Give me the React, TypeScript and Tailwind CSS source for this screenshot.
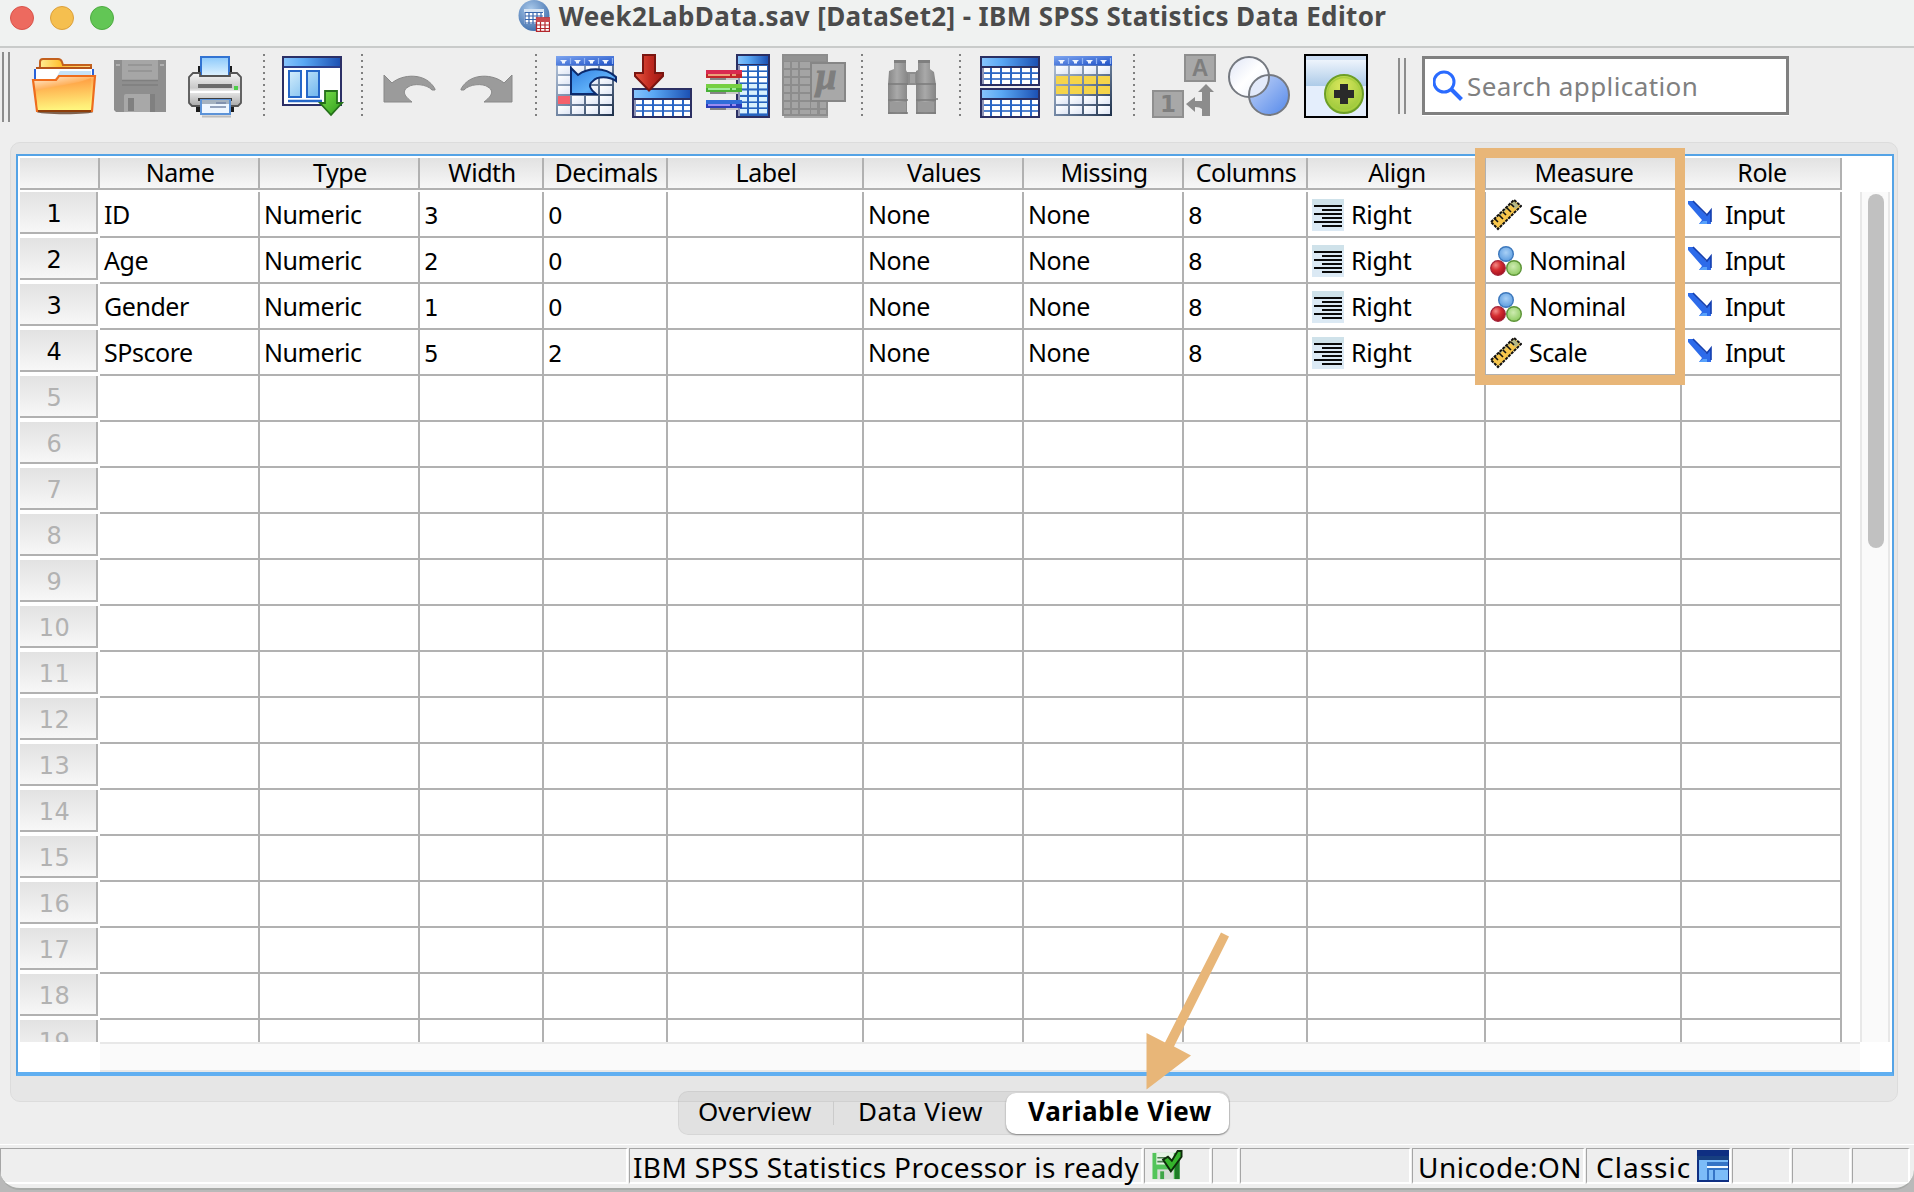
import React from "react";

const SANS = "font-['Noto_Sans','Open_Sans',sans-serif]";
const DIGITS = "font-['DejaVu_Sans',sans-serif]";
const COLUMNS =
  "grid grid-cols-[160px_160px_124px_124px_196px_160px_160px_124px_178px_196px_160px]";

const headers = ["Name", "Type", "Width", "Decimals", "Label", "Values", "Missing", "Columns", "Align", "Measure", "Role"];

type Variable = { name: string; width: string; decimals: string; measure: "Scale" | "Nominal" };

const variables: Variable[] = [
  { name: "ID", width: "3", decimals: "0", measure: "Scale" },
  { name: "Age", width: "2", decimals: "0", measure: "Nominal" },
  { name: "Gender", width: "1", decimals: "0", measure: "Nominal" },
  { name: "SPscore", width: "5", decimals: "2", measure: "Scale" },
];

/* ---------- shared gradients ---------- */

function Gradients() {
  return (
    <svg className="absolute h-0 w-0" aria-hidden="true">
      <defs>
        <linearGradient id="blueBar" x1="0" x2="1" y1="0" y2="0">
          <stop offset="0" stopColor="#86c4fd" />
          <stop offset="0.35" stopColor="#5aa8f4" />
          <stop offset="1" stopColor="#1c51b4" />
        </linearGradient>
        <linearGradient id="gridBar" x1="0" x2="1" y1="0" y2="1">
          <stop offset="0" stopColor="#7fa6f0" />
          <stop offset="1" stopColor="#1c4fc6" />
        </linearGradient>
        <linearGradient id="gridFrame" x1="0" x2="1" y1="0" y2="1">
          <stop offset="0" stopColor="#b6c6dc" />
          <stop offset="0.5" stopColor="#7387a4" />
          <stop offset="1" stopColor="#1d2f49" />
        </linearGradient>
        <linearGradient id="gridCell" x1="0" x2="1" y1="0" y2="1">
          <stop offset="0" stopColor="#ffffff" />
          <stop offset="1" stopColor="#dfe6f5" />
        </linearGradient>
        <linearGradient id="pane" x1="0" x2="1" y1="0" y2="1">
          <stop offset="0" stopColor="#d4eefc" />
          <stop offset="1" stopColor="#6fb6ee" />
        </linearGradient>
        <linearGradient id="folderFront" x1="0" x2="0.35" y1="0" y2="1">
          <stop offset="0" stopColor="#fff3e6" />
          <stop offset="0.4" stopColor="#ffae55" />
          <stop offset="1" stopColor="#fff67e" />
        </linearGradient>
        <linearGradient id="folderShine" x1="0" x2="0" y1="0" y2="1">
          <stop offset="0" stopColor="#ff9a3c" />
          <stop offset="1" stopColor="#fff77f" />
        </linearGradient>
        <linearGradient id="folderBack" x1="0" x2="1" y1="0" y2="0">
          <stop offset="0" stopColor="#fff2a0" />
          <stop offset="0.45" stopColor="#ffbf2e" />
          <stop offset="1" stopColor="#ffd989" />
        </linearGradient>
        <linearGradient id="paperBlue" x1="0" x2="0" y1="0" y2="1">
          <stop offset="0" stopColor="#8cc9fb" />
          <stop offset="1" stopColor="#e4f5ff" />
        </linearGradient>
        <linearGradient id="printerBody" x1="0" x2="0" y1="0" y2="1">
          <stop offset="0" stopColor="#f4f4f4" />
          <stop offset="0.45" stopColor="#c9c9c9" />
          <stop offset="0.55" stopColor="#ececec" />
          <stop offset="1" stopColor="#a8a8a8" />
        </linearGradient>
        <linearGradient id="greenArrow" x1="0" x2="1" y1="0" y2="1">
          <stop offset="0" stopColor="#7be04a" />
          <stop offset="1" stopColor="#2f9d1c" />
        </linearGradient>
        <linearGradient id="redArrow" x1="0" x2="1" y1="0" y2="0">
          <stop offset="0" stopColor="#e8553f" />
          <stop offset="0.55" stopColor="#c02a20" />
          <stop offset="1" stopColor="#a01a14" />
        </linearGradient>
        <linearGradient id="curveArrow" x1="0" x2="1" y1="0" y2="1">
          <stop offset="0" stopColor="#2f7fe2" />
          <stop offset="0.6" stopColor="#5fb0f8" />
          <stop offset="1" stopColor="#1d5fd0" />
        </linearGradient>
        <linearGradient id="whiteDisc" x1="0" x2="1" y1="0" y2="1">
          <stop offset="0" stopColor="#dfe5f6" />
          <stop offset="0.5" stopColor="#ffffff" />
          <stop offset="1" stopColor="#e8eefb" />
        </linearGradient>
        <linearGradient id="blueDisc" x1="0" x2="1" y1="0" y2="1">
          <stop offset="0" stopColor="#c6d6f8" />
          <stop offset="1" stopColor="#5388ea" />
        </linearGradient>
        <linearGradient id="skyBand" x1="0" x2="0" y1="0" y2="1">
          <stop offset="0" stopColor="#eef4fc" />
          <stop offset="1" stopColor="#adcbe8" />
        </linearGradient>
        <radialGradient id="limeDisc" cx="0.45" cy="0.3" r="0.7">
          <stop offset="0" stopColor="#dbe85c" />
          <stop offset="1" stopColor="#97c53a" />
        </radialGradient>
        <radialGradient id="ballBlue" cx="0.5" cy="0.4" r="0.6">
          <stop offset="0" stopColor="#a8d0f6" />
          <stop offset="1" stopColor="#5c9cdf" />
        </radialGradient>
        <radialGradient id="ballRed" cx="0.35" cy="0.3" r="0.7">
          <stop offset="0" stopColor="#f28a86" />
          <stop offset="0.5" stopColor="#d42c30" />
          <stop offset="1" stopColor="#a8131f" />
        </radialGradient>
        <radialGradient id="ballGreen" cx="0.45" cy="0.4" r="0.6">
          <stop offset="0" stopColor="#cdebb0" />
          <stop offset="1" stopColor="#8fcb62" />
        </radialGradient>
        <linearGradient id="grayTube" x1="0" x2="1" y1="0" y2="0">
          <stop offset="0" stopColor="#868686" />
          <stop offset="0.45" stopColor="#a9a9a9" />
          <stop offset="1" stopColor="#858585" />
        </linearGradient>
        <radialGradient id="appDisc" cx="0.4" cy="0.3" r="0.75">
          <stop offset="0" stopColor="#a9c9ea" />
          <stop offset="1" stopColor="#3d6cab" />
        </radialGradient>
      </defs>
    </svg>
  );
}

/* ---------- toolbar icons (64 x 64 grid) ---------- */

function Icon({ children }: { children: React.ReactNode }) {
  return (
    <svg viewBox="0 0 64 64" className="h-16 w-16 shrink-0 overflow-visible">
      {children}
    </svg>
  );
}

const OpenIcon = () => (
  <Icon>
    <ellipse cx="33" cy="58" rx="28" ry="2.2" fill="#5b3215" opacity="0.75" />
    <path d="M5 50V16l3-3V8q0-3 3-3h15q3 0 4 3l1 3h28v20H5z" fill="url(#folderBack)" stroke="#c3601d" strokeWidth="2" />
    <path d="M3 28V15h58v13z" fill="#ffffff" />
    <path d="M3 15v11M61 15v11" stroke="#2a62d8" strokeWidth="2" />
    <path d="M4 14h56" stroke="#b5541a" strokeWidth="2" />
    <path d="M24 24l4-7h31v10H20z" fill="#c5e2f8" />
    <path d="M1 26h23l3-4h36l-3 35H5z" fill="url(#folderFront)" stroke="#ee6d1d" strokeWidth="2.2" />
    <path d="M4 37C24 31 42 31 59 24l-1 32H6z" fill="url(#folderShine)" opacity="0.7" />
    <path d="M6 57h53" stroke="#8e3d0a" strokeWidth="2" />
  </Icon>
);

const SaveIcon = () => (
  <Icon>
    <path d="M6 6h52v52H8l-2-2z" fill="#8e8e8e" />
    <path d="M14 6h36v20H14z" fill="#a6a6a6" />
    <path d="M20 11h24M20 17h24" stroke="#969696" strokeWidth="2" />
    <path d="M14 26.500h36M14 31h36" stroke="#7f7f7f" strokeWidth="1.500" />
    <path d="M8 10h4v2H8zM52 10h4v2h-4z" fill="#b0b0b0" />
    <path d="M16 42q0-2 2-2h26v18H16z" fill="#a8a8a8" />
    <path d="M20 44h6v13h-6zM42 40h5v18h-5z" fill="#808080" />
  </Icon>
);

const PrintIcon = () => (
  <Icon>
    <path d="M14 12h34v14H14zM12 50h38v8H12z" fill="#1b1b1b" />
    <path d="M17 3h28v20H17z" fill="url(#paperBlue)" stroke="#3273d2" strokeWidth="2" />
    <path d="M9 19h7v3h30v-3h7l4 4v26l-3 3H8l-3-3V23z" fill="url(#printerBody)" stroke="#555" strokeWidth="1.800" />
    <path d="M14 30h34v4H14z" fill="#6b6b6b" />
    <path d="M50 32h4v4h-4z" fill="#4fce4a" />
    <path d="M6 38h50" stroke="#fff" strokeWidth="2" />
    <path d="M14 44h34v3H14z" fill="#3d3d3d" />
    <path d="M17 46h29v14H17z" fill="#eef6ff" stroke="#5c93d8" strokeWidth="2" />
    <path d="M18 46h27v4H18z" fill="#a5b2c0" />
    <path d="M32 49h10M26 53h16" stroke="#7586a8" strokeWidth="1.600" />
    <path d="M18 62.500h29" stroke="#bdbdbd" strokeWidth="2" />
  </Icon>
);

const RecallIcon = () => (
  <Icon>
    <path d="M3 3h58v48H3z" fill="#fff" stroke="#2b2f66" strokeWidth="2" />
    <path d="M4 4h56v9H4z" fill="url(#blueBar)" />
    <path d="M4 13h56" stroke="#2b3f8c" strokeWidth="2" />
    <path d="M9 17h12v26H9zM27 17h12v26H27z" fill="url(#pane)" stroke="#2567c8" strokeWidth="2" />
    <path d="M8 47h34" stroke="#2567c8" strokeWidth="2.500" />
    <path d="M45 37h12v12h5L51 61 40 49h5z" fill="url(#greenArrow)" stroke="#25701a" strokeWidth="1.800" />
  </Icon>
);

const curve = "M8 21l8 8c10-9 34-11 43 6v1h-3c-5-6-19-7-24-3-8 5-1 11 4 15H8z";

const UndoIcon = () => (
  <Icon>
    <path d={curve} fill="#9b9b9b" stroke="#888" strokeWidth="1" />
  </Icon>
);

const RedoIcon = () => (
  <Icon>
    <path d={curve} fill="#9b9b9b" stroke="#888" strokeWidth="1" transform="matrix(-1 0 0 1 68 0)" />
  </Icon>
);

/* 4 x 5 data grid with a filter-style header, 58 x 60 */
function DataGrid({ x = 0, accents = [] }: { x?: number; accents?: [number, number, string][] }) {
  const cols = [2, 16, 30, 44];
  const rows = [12, 22, 32, 42, 52];
  return (
    <g transform={`translate(${x} 2)`}>
      <path d="M0 0h58v60H0z" fill="url(#gridFrame)" />
      <path d="M0 0h58v9.500H0z" fill="url(#gridBar)" />
      {cols.map((c) => (
        <path key={c} d={`M${c + 2} 4h7l-2 2v1.500h-3V6z`} fill="#eef4ff" />
      ))}
      {cols.map((c) => (
        <path key={c} d={`M${c + 12.5} 2v6`} stroke="#8fb2f3" strokeWidth="1.200" />
      ))}
      {rows.map((r) =>
        cols.map((c) => {
          const hit = accents.find(([ax, ay]) => cols[ax] === c && rows[ay] === r);
          return <rect key={`${r}-${c}`} x={c} y={r - 2} width="12" height="8" fill={hit ? hit[2] : "url(#gridCell)"} />;
        }),
      )}
    </g>
  );
}

const GoToCaseIcon = () => (
  <Icon>
    <DataGrid x={2} accents={[[0, 3, "#f5606c"]]} />
    <path
      d="M17 14l7 7c9-7 26-9 38 2v4c-7-5-19-5-23 0-6 4-2 9 3 13H17z"
      fill="url(#curveArrow)"
      stroke="#0c2a6c"
      strokeWidth="2"
    />
  </Icon>
);

/* Blue-barred table used in several icons */
function BlueTable({ y, h, rows }: { y: number; h: number; rows: number[] }) {
  return (
    <g transform={`translate(2 ${y})`}>
      <rect width="60" height={h} fill="#2b2f62" />
      <rect x="2" y="2" width="56" height="8" fill="url(#blueBar)" />
      <rect x="2" y="12" width="56" height={h - 14} fill="#2b66c4" />
      <rect x="2" y="12" width="2" height={h - 14} fill="#8d93b5" />
      {rows.map((r) =>
        [4, 12, 22, 32, 42, 52].map((x) => (
          <rect key={`${r}-${x}`} x={x} y={r} width={x === 4 || x === 52 ? 6 : 8} height="4.200" fill="#fff" />
        )),
      )}
    </g>
  );
}

const GoToVariableIcon = () => (
  <Icon>
    <BlueTable y={34} h={30} rows={[12, 18, 23.8]} />
    <path d="M13 1h12v18h8v3L19 36.500 5 22v-3h8z" fill="url(#redArrow)" stroke="#7a1510" strokeWidth="2" />
  </Icon>
);

const VariablesIcon = () => (
  <Icon>
    <rect x="30" width="34" height="64" fill="#2b2f62" />
    <rect x="32" y="2" width="30" height="8" fill="url(#blueBar)" />
    <rect x="32" y="11" width="30" height="51" fill="#2764bf" />
    <rect x="32" y="11" width="2" height="51" fill="#8d93b5" />
    {[12, 18, 24, 30, 36.5, 43, 49, 55].map((y, i) =>
      [34, 43, 53].map((x) => (
        <rect key={`${x}-${y}`} x={x} y={y} width={x === 34 ? 7 : 8} height="4.400" fill={i > 2 ? "#d9f1fd" : "#fff"} />
      )),
    )}
    {[
      [16, "#d92a50", "#c2262a", "#eda27a"],
      [30, "#76cf42", "#48b038", "#a0ec9c"],
      [46, "#2f6dd8", "#2a3cb8", "#9a8cf0"],
    ].map(([y, a, b, c]) => (
      <g key={String(y)} transform={`translate(0 ${y})`}>
        <rect width="36" height="4" fill={String(a)} />
        <rect y="4" width="36" height="4" fill={String(b)} />
        <rect x="2" y="4" width="22" height="2" fill={String(c)} />
        <rect x="26" y="4" width="4" height="2" fill={String(c)} />
        <rect x="4" y="8" width="16" height="2" fill="#858585" />
        <rect x="20" y="8" width="12" height="2" fill="#c8c8c8" />
      </g>
    ))}
  </Icon>
);

const DescriptivesIcon = () => (
  <Icon>
    <path d="M2 62h44v2H2z" fill="#a9a9a9" />
    <path d="M0 0h46v62H0z" fill="#8d8d8d" />
    <path d="M2 2h42v5H2z" fill="#929292" />
    {[8, 16, 24, 32, 40, 48, 56].map((y) =>
      [2, 10, 18, 29, 38].map((x) => (
        <rect key={`${x}-${y}`} x={x} y={y} width={x === 18 ? 10 : 6} height={y === 56 ? 4 : 6} fill="#a4a4a4" />
      )),
    )}
    <path d="M29 9h34v38H29z" fill="#a8a8a8" stroke="#868686" strokeWidth="2" />
    <text x="34" y="35" fontSize="37" fontWeight="700" fontStyle="italic" fill="#7e7e7e" stroke="#7e7e7e" strokeWidth="1" fontFamily="Liberation Serif, serif">
      μ
    </text>
  </Icon>
);

const FindIcon = () => (
  <Icon>
    <path d="M27 18h12v13H27z" fill="#8d8d8d" />
    <path d="M30 20h5v9h-5z" fill="#a2a2a2" />
    <path d="M14 6h12v10l2 4v11h-1v29H8V31l1-14 5-2z" fill="url(#grayTube)" />
    <path d="M38 6h12v9l4 3 2 13v29H36V31V17l2-1z" fill="url(#grayTube)" />
    <path d="M14 6h12v3H14zM38 6h12v3H38z" fill="#7f7f7f" />
    <path d="M8 30h20M36 30h20M8 46h20M36 46h20M8 59h20M36 59h20" stroke="#7b7b7b" strokeWidth="1.500" />
    <path d="M10 48h16v10H10zM38 48h16v10H38z" fill="#9a9a9a" />
    <path d="M56 44h2v2h-2z" fill="#999" />
  </Icon>
);

const SplitIcon = () => (
  <Icon>
    <BlueTable y={2} h={30} rows={[12, 18, 23.8]} />
    <BlueTable y={34} h={30} rows={[12, 18, 23.8]} />
  </Icon>
);

const yellow: [number, number, string][] = [0, 1, 2, 3].flatMap((c) => [
  [c, 1, "#f5d44a"] as [number, number, string],
  [c, 2, "#f5d44a"] as [number, number, string],
]);

const SelectIcon = () => (
  <Icon>
    <DataGrid accents={yellow} />
  </Icon>
);

const ValueLabelsIcon = () => (
  <Icon>
    <path d="M33 1h30v26H33zM1 37h30v26H1z" fill="#a8a8a8" stroke="#8f8f8f" strokeWidth="2" />
    <text x="48" y="22" fontSize="23" fontWeight="700" textAnchor="middle" fill="#7e7e7e" fontFamily="Liberation Sans, sans-serif">
      A
    </text>
    <text x="16" y="58" fontSize="23" fontWeight="700" textAnchor="middle" fill="#7e7e7e" fontFamily="DejaVu Sans, sans-serif">
      1
    </text>
    <path d="M54 30l8 8h-4v24h-8V55q-2-2-7-2v5l-9-8 9-7v4h7V38h-4z" fill="#8c8c8c" />
  </Icon>
);

const SetsIcon = () => (
  <Icon>
    <circle cx="21" cy="23" r="20" fill="url(#whiteDisc)" />
    <circle cx="41" cy="41" r="20" fill="url(#blueDisc)" />
    <path d="M40.500 21A20 20 0 0 1 21.500 43 20 20 0 0 1 40.500 21z" fill="#e3eafa" />
    <circle cx="21" cy="23" r="20" fill="none" stroke="#757980" strokeWidth="2" />
    <circle cx="41" cy="41" r="20" fill="none" stroke="#757980" strokeWidth="2" />
  </Icon>
);

const CustomizeIcon = () => (
  <Icon>
    <rect width="64" height="64" fill="#000" />
    <rect x="2" y="2" width="60" height="60" fill="#e4eefc" />
    <rect x="2" y="2" width="60" height="4" fill="#cbdcf2" />
    <rect x="2" y="6" width="60" height="26" fill="url(#skyBand)" />
    <circle cx="40" cy="40" r="19" fill="url(#limeDisc)" stroke="#6d9f26" strokeWidth="2" />
    <circle cx="40" cy="40" r="16.500" fill="none" stroke="#a9cf3f" strokeWidth="1.500" />
    <path d="M36 30h8v6h6v8h-6v6h-8v-6h-6v-8h6z" fill="#2a2a2a" />
  </Icon>
);

const Dots = ({ className = "" }: { className?: string }) => (
  <div
    className={`h-[62px] w-[2px] shrink-0 bg-[repeating-linear-gradient(to_bottom,#808080_0_2px,transparent_2px_6px)] ${className}`}
  />
);

const Grip = ({ className = "" }: { className?: string }) => (
  <div className={`w-2 shrink-0 border-x-2 border-[#8d8d8d] ${className}`} />
);

/* ---------- cell icons ---------- */

const AlignRightIcon = () => (
  <svg viewBox="0 0 32 32" className="size-8 shrink-0">
    <rect width="32" height="32" fill="#dbe9f4" />
    <path d="M0 0h32v6H0z" fill="#cfe2ea" />
    <path d="M2 7h28M10 11h20M2 15h28M10 19h20M2 23h28M10 27h20" stroke="#0a0a0a" strokeWidth="2" />
  </svg>
);

const ScaleIcon = () => (
  <svg viewBox="0 0 32 32" className="size-8 shrink-0">
    <path d="M1 23L24 1l7 6L8 30z" fill="#f7c64c" />
    <path d="M8 17L24 2l5 5-4 3-4-4L9 18z" fill="#b5b887" />
    <path d="M1 23L24 1l7 6L8 30z" fill="none" stroke="#111" strokeWidth="2" strokeDasharray="3 1" />
    <path d="M5 20l3 3M9 16l4 4M13 13l3 3M17 9l4 4M21 5l3 3" stroke="#111" strokeWidth="1.600" />
  </svg>
);

const NominalIcon = () => (
  <svg viewBox="0 0 32 32" className="size-8 shrink-0">
    <circle cx="16" cy="9" r="7.300" fill="url(#ballBlue)" stroke="#3d78bd" strokeWidth="1.400" />
    <circle cx="8" cy="23" r="7.300" fill="url(#ballRed)" stroke="#a3243a" strokeWidth="1.200" />
    <circle cx="24" cy="23" r="7.300" fill="url(#ballGreen)" stroke="#5d9438" strokeWidth="1.400" />
  </svg>
);

const InputIcon = () => (
  <svg viewBox="0 0 32 32" className="size-8 shrink-0">
    <path d="M2 2h5l13 14 5-5v14H13l3-4L2 5z" fill="#2d6bea" />
    <path d="M7 2l14 14 4-5v12" fill="none" stroke="#153fae" strokeWidth="1.600" />
    <path d="M13 25h8v-3h-4z" fill="#58a2fb" />
  </svg>
);

/* ---------- status icons ---------- */

const SavedIcon = () => (
  <svg viewBox="0 0 32 32" className="h-[31px] w-8 shrink-0">
    <path d="M1 3h28v27H1z" fill="#53c55a" />
    <path d="M24 10h5v20h-5z" fill="#1e7c27" />
    <path d="M5 3h18v12H5z" fill="#e4f4e3" />
    <path d="M6 8h8M6 12h8" stroke="#4f7f52" strokeWidth="1.800" />
    <path d="M6 20h17v10H6z" fill="#d6dcd6" />
    <path d="M9 22h4v8H9z" fill="#3ea647" />
    <path d="M12 10l5-3 4 4 6-10h4v6l-11 15z" fill="#35b52c" stroke="#0d2d0a" strokeWidth="2" />
  </svg>
);

const ClassicIcon = () => (
  <svg viewBox="0 0 32 32" className="size-8 shrink-0">
    <path d="M0 0h32v32H0z" fill="#0f2f82" />
    <path d="M0 6h32v4H0z" fill="#173f80" />
    <path d="M2 10h29v20H2z" fill="#7cbcf8" />
    <path d="M10 12h21v18H10z" fill="#3474c6" />
    <path d="M10 16h21v2H10z" fill="#eef7ff" />
    <path d="M12 20h4v10h-4zM18 20h13v10H18z" fill="#7cbcf8" />
  </svg>
);

const AppIcon = () => (
  <svg viewBox="0 0 32 32" className="size-8 shrink-0">
    <circle cx="16" cy="15.500" r="15.500" fill="url(#appDisc)" />
    <path d="M6 9h20v15H6z" fill="#fff" />
    <path d="M6 9h20v3H6z" fill="#d6e4f3" />
    <path d="M7 12.500h18M7 16h18M7 19.500h18M7 23h18M7 12v12M11 12v12M15 12v12M19 12v12M23 12v12" stroke="#3767ae" strokeWidth="1.200" />
    <path d="M18.500 18h13v13.500h-13z" fill="#fff" stroke="#b3262c" strokeWidth="1.300" />
    <path d="M18 17.500h14V22H18z" fill="#c94a4f" />
    <path d="M18 25h14M18 28.500h14M22.500 22v9M27 22v9" stroke="#b3262c" strokeWidth="1.200" />
  </svg>
);

/* ---------- page ---------- */

const cell = "flex h-[46px] items-center border-b-2 border-r-2 border-[#b1b1b1] pl-1 pt-[2px]";
const digitCell = "flex h-[46px] items-center border-b-2 border-r-2 border-[#b1b1b1] pl-1 pt-1 font-['DejaVu_Sans',sans-serif] text-[23px]";
const panel = "flex shrink-0 items-center border-l border-t border-r-2 border-b-2 border-l-[#a5a5a5] border-t-[#a5a5a5] border-r-white border-b-white";

function Row({ index }: { index: number }) {
  const v = variables[index];
  return (
    <div className={COLUMNS}>
      <div className={cell}>{v?.name}</div>
      <div className={cell}>{v && "Numeric"}</div>
      <div className={digitCell}>{v?.width}</div>
      <div className={digitCell}>{v?.decimals}</div>
      <div className={cell} />
      <div className={cell}>{v && "None"}</div>
      <div className={cell}>{v && "None"}</div>
      <div className={digitCell}>{v && "8"}</div>
      <div className={`${cell} gap-[7px]`}>
        {v && (
          <>
            <AlignRightIcon />
            <span className="tracking-[-0.3px]">Right</span>
          </>
        )}
      </div>
      <div className={`${cell} gap-[7px]`}>
        {v && (
          <>
            {v.measure === "Scale" ? <ScaleIcon /> : <NominalIcon />}
            <span>{v.measure}</span>
          </>
        )}
      </div>
      <div className={`${cell} gap-[7px]`}>
        {v && (
          <>
            <InputIcon />
            <span className="tracking-[-0.9px]">Input</span>
          </>
        )}
      </div>
    </div>
  );
}

export default function App() {
  const rows = Array.from({ length: 19 }, (_, i) => i);
  return (
    <div className={`relative h-[1192px] w-[1914px] overflow-hidden bg-[#b9b9b9] text-black ${SANS}`}>
      <Gradients />
      <div className="flex h-[1190px] flex-col overflow-hidden rounded-b-[20px] border-b-2 border-[#a9aba9] bg-[#eeeeee]">
        {/* Title bar */}
        <div className="relative flex h-[48px] shrink-0 items-start justify-center border-b-2 border-[#c9cbca] bg-[#f0f2f1]">
          <div className="absolute left-[10px] top-[6px] flex gap-4">
            <span className="size-6 rounded-full border border-[#d9544b] bg-[#ed6a5f]" />
            <span className="size-6 rounded-full border border-[#dca03c] bg-[#f5bf4f]" />
            <span className="size-6 rounded-full border border-[#4dab41] bg-[#62c655]" />
          </div>
          <div className="flex items-center gap-[9px] pr-[10px]">
            <AppIcon />
            <h1 className="whitespace-nowrap text-[26px] font-bold leading-8 tracking-[0.37px] text-[#4b4b4b]">
              Week2LabData.sav [DataSet2] - IBM SPSS Statistics Data Editor
            </h1>
          </div>
        </div>

        {/* Toolbar */}
        <div className="flex h-[94px] shrink-0 items-start pl-[2px] pt-[6px]">
          <Grip className="-mt-[2px] mr-[22px] h-[70px]" />
          <div className="flex gap-3">
            <OpenIcon />
            <SaveIcon />
            <PrintIcon />
          </div>
          <Dots className="mx-[15px]" />
          <RecallIcon />
          <Dots className="ml-[17px] mr-[13px]" />
          <div className="flex gap-3">
            <UndoIcon />
            <RedoIcon />
          </div>
          <Dots className="ml-[19px] mr-[17px]" />
          <div className="flex gap-3">
            <GoToCaseIcon />
            <GoToVariableIcon />
            <VariablesIcon />
            <DescriptivesIcon />
          </div>
          <Dots className="ml-[15px] mr-[17px]" />
          <FindIcon />
          <Dots className="ml-[15px] mr-[17px]" />
          <div className="flex gap-3">
            <SplitIcon />
            <SelectIcon />
          </div>
          <Dots className="ml-[15px] mr-[17px]" />
          <div className="flex gap-3">
            <ValueLabelsIcon />
            <SetsIcon />
            <CustomizeIcon />
          </div>
          <Grip className="ml-[30px] mr-4 mt-1 h-14" />
          <div className="mt-[2px] flex h-[59px] w-[367px] items-center border-[3px] border-[#808080] bg-white pl-2 shadow-[0_1px_0_#fff]">
            <svg viewBox="0 0 32 32" className="size-8 shrink-0">
              <circle cx="11" cy="12" r="10" fill="none" stroke="#2a6bff" strokeWidth="3" />
              <path d="M18.500 19.500l10 10" stroke="#2a6bff" strokeWidth="4" />
            </svg>
            <span className="ml-[2px] pt-[1px] text-[26px] tracking-[0.4px] text-[#808080]">Search application</span>
          </div>
        </div>

        {/* Variable grid */}
        <div className="mx-auto flex h-[960px] w-[1888px] shrink-0 -translate-x-[3px] justify-start rounded-[10px] border border-[#dcdcdc] bg-[#e6e6e6] pl-[5px] pt-[11px]">
          <div className="relative h-[922px] w-[1878px] border-2 border-b-4 border-[#54a3e6] border-b-[#60aff1] bg-white pl-[2px] pt-[2px] text-[25px] tracking-[-0.45px]">
            <div className="flex h-8">
              <div className="h-8 w-20 border-b-2 border-r-2 border-[#b1b1b1] bg-linear-to-b from-[#e2e2e2] to-[#f7f7f7]" />
              <div className={COLUMNS}>
                {headers.map((h) => (
                  <div
                    key={h}
                    className="flex h-8 items-center justify-center border-b-2 border-r-2 border-[#b1b1b1] bg-linear-to-b from-[#e2e2e2] to-[#f7f7f7] pb-px pl-[2px] leading-none"
                  >
                    <span>{h}</span>
                  </div>
                ))}
              </div>
            </div>
            <div className="flex pt-[2px]">
              <div className="flex h-[850px] w-20 flex-col gap-1 overflow-hidden">
                {rows.map((i) => (
                  <div
                    key={i}
                    className={`flex h-[42px] w-[78px] shrink-0 items-center justify-center border-b-2 border-r-2 border-[#b1b1b1] bg-linear-to-b from-[#e2e2e2] to-[#f7f7f7] pr-[7px] pt-1 text-[24px] leading-none tracking-[0.5px] ${DIGITS} ${i < 4 ? "text-black" : "text-[#b2b2b2]"}`}
                  >
                    {i + 1}
                  </div>
                ))}
              </div>
              <div className="h-[850px] w-[1760px] overflow-hidden">
                {rows.map((i) => (
                  <Row key={i} index={i} />
                ))}
              </div>
              <div className="flex h-[850px] w-[30px] justify-center border-x-2 border-[#e8e8e8] bg-[#fafafa] pl-[2px] pt-[2px]">
                <div className="h-[354px] w-4 rounded-full bg-[#c1c1c1]" />
              </div>
            </div>
            <div className="ml-20 h-[30px] w-[1760px] border-y-2 border-[#e8e8e8] bg-[#fafafa]" />
            {/* Highlight around the Measure column */}
            <div className="absolute left-[1457px] top-[-8px] h-[237px] w-[210px] border-[10px] border-[#e8b678]" />
          </div>
        </div>

        {/* View switcher overlapping the bottom of the group box */}
        <div className="relative z-10 ml-[678px] mt-[-11px] flex h-[44px] w-[552px] shrink-0 items-center rounded-[10px] border border-black/5 bg-black/5 text-[26px] leading-none">
          <div className="w-[154px] pb-[4px] pl-[19px]">Overview</div>
          <div className="h-6 w-px bg-[#cbcbcb]" />
          <div className="w-[172px] whitespace-nowrap pb-[4px] pl-[24px] tracking-[0.4px]">Data View</div>
          <div className="flex h-[41px] w-[223px] items-center justify-center whitespace-nowrap rounded-[10px] bg-white pb-[4px] pl-[5px] font-bold tracking-[0.65px] shadow-[0_1px_2px_rgba(0,0,0,0.4)]">
            Variable View
          </div>
        </div>

        {/* Status bar */}
        <div className="mt-[9px] flex h-10 shrink-0 gap-px whitespace-nowrap border-t border-white pt-[3px] text-[28px] leading-none">
          <div className={`${panel} w-[628px]`} />
          <div className={`${panel} w-[514px] pl-[3px] pt-[2px] tracking-[0.35px]`}>IBM SPSS Statistics Processor is ready</div>
          <div className={`${panel} w-[67px] pl-[6px]`}>
            <SavedIcon />
          </div>
          <div className={`${panel} w-[27px]`} />
          <div className={`${panel} w-[171px]`} />
          <div className={`${panel} w-[173px] pl-[5px] pt-[2px] tracking-[0.5px]`}>Unicode:ON</div>
          <div className={`${panel} w-[145px] gap-[6px] pl-[9px] tracking-[1px]`}>
            <span className="pt-[2px]">Classic</span>
            <ClassicIcon />
          </div>
          <div className={`${panel} w-[59px]`} />
          <div className={`${panel} w-[59px]`} />
          <div className={`${panel} w-[58px]`} />
        </div>
      </div>

      {/* Annotation arrow pointing at the Variable View tab */}
      <svg viewBox="0 0 84 158" className="absolute left-[1146px] top-[932px] z-20 h-[158px] w-[84px]">
        <path d="M75 0.500L83 4.500 28 114.500 45 123.500 0.500 157.500V101L19 110.500z" fill="#e8b678" />
      </svg>
    </div>
  );
}
